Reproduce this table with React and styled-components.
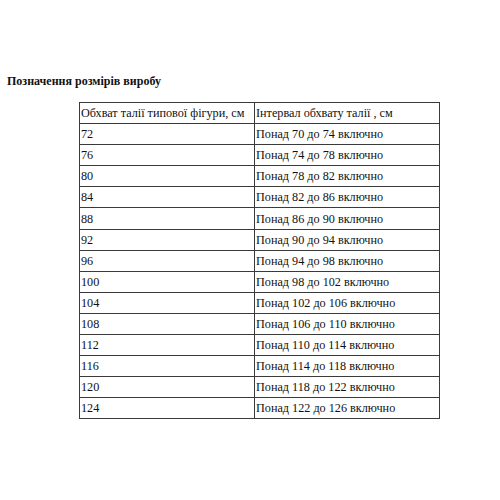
import React from 'react';
import styled, { createGlobalStyle } from 'styled-components';

const GlobalStyle = createGlobalStyle`
  html, body {
    margin: 0;
    padding: 0;
    background: #fff;
  }
  body {
    font-family: "Liberation Serif", "Times New Roman", serif;
    color: #111;
  }
`;

const Page = styled.div`
  width: 500px;
  height: 500px;
  padding: 73px 0 0 7px;
  box-sizing: border-box;
`;

const Title = styled.h3`
  margin: 0 0 13px 0;
  font-size: 12px;
  font-weight: bold;
  line-height: 16px;
`;

const Table = styled.table`
  margin-left: 72px;
  width: 361px;
  border-collapse: collapse;
  font-size: 12.2px;
  line-height: 15px;
`;

const Cell = styled.td`
  border: 1px solid #3a3a3a;
  height: 21.1px;
  padding: 1px 1px 0 1px;
  box-sizing: border-box;
  vertical-align: middle;
  white-space: nowrap;
  width: ${(p) => (p.$first ? '175px' : 'auto')};
`;

const sizes = [72, 76, 80, 84, 88, 92, 96, 100, 104, 108, 112, 116, 120, 124];

export default function App() {
  return (
    <Page>
      <GlobalStyle />
      <Title>Позначення розмірів виробу</Title>
      <Table>
        <tbody>
          <tr>
            <Cell $first>Обхват талії типової фігури, см</Cell>
            <Cell>Інтервал обхвату талії , см</Cell>
          </tr>
          {sizes.map((s) => (
            <tr key={s}>
              <Cell $first>{s}</Cell>
              <Cell>
                Понад {s - 2} до {s + 2} включно
              </Cell>
            </tr>
          ))}
        </tbody>
      </Table>
    </Page>
  );
}
